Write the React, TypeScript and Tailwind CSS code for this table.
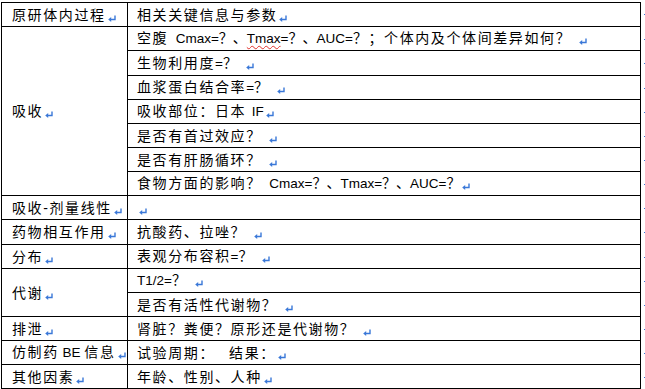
import React from "react";

const Ret = () => (
  <svg width="8" height="7" viewBox="0 0 8 7" className="inline-block ml-[2px] align-[-2px]" fill="none">
    <path d="M7 0.5 V4.5 H2" stroke="#3a78d8" strokeWidth="1.4" />
    <path d="M0.2 4.5 L3.2 2 L3.2 7 Z" fill="#3a78d8" />
  </svg>
);

const L = ({ children, wavy }: { children: React.ReactNode; wavy?: boolean }) => (
  <span
    className={
      "tracking-normal text-[13.5px] " +
      (wavy ? "underline decoration-wavy decoration-[#e0312b] decoration-1 underline-offset-2" : "")
    }
  >
    {children}
  </span>
);

const P = ({ children }: { children: React.ReactNode }) => <span className="tracking-normal">{children}</span>;

const Cell = ({
  children,
  first,
  top,
  span,
  extra,
}: {
  children?: React.ReactNode;
  first?: boolean;
  top?: boolean;
  span?: string;
  extra?: string;
}) => (
  <div
    className={
      "flex items-center whitespace-pre border-black border-r border-b " +
      (first ? "border-l pl-[10px] " : "pl-[9px] ") +
      (top ? "border-t " : "") +
      (span ? span + " " : "") +
      (extra ?? "")
    }
  >
    <span>{children}</span>
  </div>
);

const Dot = () => (
  <div className="flex items-center justify-end">
    <div className="w-[2px] h-[1px] bg-[#3a78d8]" />
  </div>
);

export default function App() {
  return (
    <div className="bg-white w-[645px] h-[389px] pt-[2px] pl-[1px] text-black text-[14px] leading-none tracking-[1.6px] font-['Liberation_Sans','Noto_Sans_CJK_SC',sans-serif]">
      <div className="grid grid-cols-[127px_513px_5px] grid-rows-[25px_24px_25px_24px_24px_24px_24px_24px_24px_25px_24px_24px_24px_24px_24px_24px]">
        <Cell first top>原研体内过程<Ret /></Cell>
        <Cell top>相关关键信息与参数<Ret /></Cell>
        <Dot />

        <Cell first span="row-span-7">吸收<Ret /></Cell>
        <Cell>
          空腹<L>{"  Cmax="}</L><P>？、</P><L wavy>Tmax</L><L>=</L><P>？、</P><L>AUC=</L>
          {"？；个体内及个体间差异如何？ "}
          <Ret />
        </Cell>
        <Dot />
        <Cell>生物利用度<L>=</L>{"？ "}<Ret /></Cell>
        <Dot />
        <Cell>血浆蛋白结合率<L>=</L>{"？ "}<Ret /></Cell>
        <Dot />
        <Cell>{"吸收部位：日本 "}<L>IF</L><Ret /></Cell>
        <Dot />
        <Cell>{"是否有首过效应？ "}<Ret /></Cell>
        <Dot />
        <Cell>{"是否有肝肠循环？ "}<Ret /></Cell>
        <Dot />
        <Cell>
          食物方面的影响？<L>{"  Cmax="}</L><P>？、</P><L>Tmax=</L><P>？、</P><L>AUC=</L><P>？</P>
          <Ret />
        </Cell>
        <Dot />

        <Cell first>吸收-剂量线性<Ret /></Cell>
        <Cell><Ret /></Cell>
        <Dot />

        <Cell first>药物相互作用<Ret /></Cell>
        <Cell>{"抗酸药、拉唑？ "}<Ret /></Cell>
        <Dot />

        <Cell first>分布<Ret /></Cell>
        <Cell>表观分布容积<L>=</L>{"？ "}<Ret /></Cell>
        <Dot />

        <Cell first span="row-span-2">代谢<Ret /></Cell>
        <Cell><L>T1/2=</L>{"？ "}<Ret /></Cell>
        <Dot />
        <Cell>{"是否有活性代谢物？ "}<Ret /></Cell>
        <Dot />

        <Cell first>排泄<Ret /></Cell>
        <Cell>{"肾脏？粪便？原形还是代谢物？ "}<Ret /></Cell>
        <Dot />

        <Cell first>仿制药<L>{" BE "}</L>信息<Ret /></Cell>
        <Cell>{"试验周期：　 结果："}<Ret /></Cell>
        <Dot />

        <Cell first>其他因素<Ret /></Cell>
        <Cell>年龄、性别、人种<Ret /></Cell>
        <Dot />
      </div>
    </div>
  );
}
